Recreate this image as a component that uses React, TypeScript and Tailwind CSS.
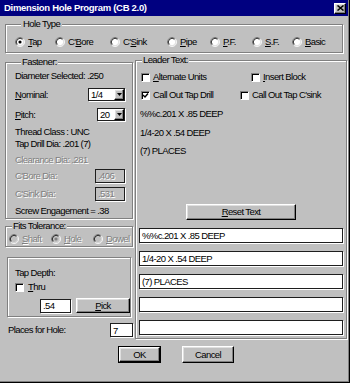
import React from 'react';

const FONT = "[font-family:'Liberation_Sans',Arial,sans-serif]";
const ETCHED = 'border border-[#808080] shadow-[1px_1px_0_#fff,inset_1px_1px_0_#fff]';
const FIELD = 'border border-[#1e1e1e] shadow-[1px_1px_0_#fff]';
const RAISED =
  'border border-t-white border-l-white border-b-black border-r-black shadow-[inset_-1px_-1px_0_#808080,inset_1px_1px_0_#dfdfdf] bg-[#c0c0c0]';
const DISABLED = 'text-[#808080] [text-shadow:1px_1px_0_#fff]';

function U({ children }: { children: React.ReactNode }) {
  return <span className="underline underline-offset-[1px]">{children}</span>;
}

function Radio({ checked = false, disabled = false }: { checked?: boolean; disabled?: boolean }) {
  return (
    <svg width="10" height="10" viewBox="0 0 12 12" className="shrink-0">
      <circle cx="6" cy="6" r="4.5" fill={disabled ? '#c0c0c0' : '#fff'} />
      <path d="M2.11 9.89 A5.5 5.5 0 0 1 9.89 2.11" stroke="#808080" fill="none" />
      <path d="M9.89 2.11 A5.5 5.5 0 0 1 2.11 9.89" stroke="#fff" fill="none" />
      <path d="M2.82 9.18 A4.5 4.5 0 0 1 9.18 2.82" stroke="#000" fill="none" />
      <path d="M9.18 2.82 A4.5 4.5 0 0 1 2.82 9.18" stroke="#dfdfdf" fill="none" />
      {checked && <circle cx="6" cy="6" r="1.9" fill={disabled ? '#808080' : '#000'} />}
    </svg>
  );
}

function Check({ checked = false }: { checked?: boolean }) {
  return (
    <div className="w-[9px] h-[9px] shrink-0 bg-white border border-t-[#808080] border-l-[#808080] border-b-white border-r-white shadow-[inset_1px_1px_0_#000] flex items-center justify-center">
      {checked && (
        <svg width="7" height="7" viewBox="0 0 7 7">
          <polyline points="1,3 3,5 6,1.5" stroke="#000" strokeWidth="1.4" fill="none" />
        </svg>
      )}
    </div>
  );
}

function Combo({ value, width }: { value: string; width: string }) {
  return (
    <div className={`${width} h-[13px] bg-white ${FIELD} flex items-center justify-between`}>
      <span className="pl-[2px]">{value}</span>
      <div className={`w-[10px] h-[11px] ${RAISED} flex items-center justify-center`}>
        <svg width="5" height="3" viewBox="0 0 5 3">
          <polygon points="0,0 5,0 2.5,3" fill="#000" />
        </svg>
      </div>
    </div>
  );
}

function TextBox({ value = '', className = '' }: { value?: string; className?: string }) {
  return (
    <div className={`bg-white ${FIELD} flex items-center pl-[2px] leading-[11px] ${className}`}>
      {value}
    </div>
  );
}

export default function App() {
  const holeTypes: [React.ReactNode, string, boolean][] = [
    [<><U>T</U>ap</>, 'w-[40px]', true],
    [<>C'<U>B</U>ore</>, 'w-[55px]', false],
    [<>C'<U>S</U>ink</>, 'w-[57px]', false],
    [<><U>P</U>ipe</>, 'w-[43px]', false],
    [<><U>P</U>.F.</>, 'w-[42px]', false],
    [<><U>S</U>.F.</>, 'w-[40px]', false],
    [<><U>B</U>asic</>, 'w-[40px]', false],
  ];

  return (
    <div
      className={`w-[350px] h-[383px] bg-[#c0c0c0] overflow-hidden flex flex-col text-[9.5px] tracking-[-0.6px] leading-[12px] text-black ${FONT} shadow-[inset_-1px_-1px_0_#000,inset_-2px_-2px_0_#808080]`}
    >
      {/* title bar */}
      <div className="h-[16px] w-[348px] shrink-0 bg-[#000080] flex items-center justify-between pl-[4px] pr-[2px]">
        <span className="text-white font-bold text-[9.5px] tracking-[-0.3px]">Dimension Hole Program (CB 2.0)</span>
        <div className={`w-[12px] h-[11px] ${RAISED} flex items-center justify-center`}>
          <svg width="7" height="6" viewBox="0 0 7 6">
            <path d="M0.5 0.5 L6.5 5.5 M6.5 0.5 L0.5 5.5" stroke="#000" strokeWidth="1.5" />
          </svg>
        </div>
      </div>

      {/* hole type */}
      <fieldset className={`mt-[3px] ml-[5px] w-[338px] ${ETCHED} pt-[7px] pb-[4px] pl-[9px]`}>
        <legend className="ml-[6px] px-[2px] leading-[10px] bg-[#c0c0c0]">Hole Type</legend>
        <div className="flex items-center h-[12px]">
          {holeTypes.map(([label, w, on], i) => (
            <div key={i} className={`${w} flex items-center gap-[3px]`}>
              <Radio checked={on} />
              <span>{label}</span>
            </div>
          ))}
        </div>
      </fieldset>

      <div className="flex ml-[5px] mt-[1px]">
        {/* left column */}
        <div className="w-[128px] flex flex-col">
          <fieldset className={`mt-[3px] ${ETCHED} pl-[9px] pb-[1px]`}>
            <legend className="ml-[6px] px-[1px] leading-[10px] bg-[#c0c0c0]">Fastener:</legend>
            <div className="mt-[3px] h-[12px] flex items-center">Diameter Selected: .250</div>
            <div className="mt-[6px] h-[13px] flex items-center">
              <span className="w-[73px]">
                <U>N</U>ominal:
              </span>
              <Combo value="1/4" width="w-[37px]" />
            </div>
            <div className="mt-[7px] h-[13px] flex items-center">
              <span className="w-[82px]">
                <U>P</U>itch:
              </span>
              <Combo value="20" width="w-[28px]" />
            </div>
            <div className="mt-[5px] h-[12px] flex items-center">Thread Class : UNC</div>
            <div className="h-[12px] flex items-center">Tap Drill Dia: .201 (7)</div>
            <div className={`mt-[4px] h-[12px] flex items-center ${DISABLED}`}>Clearance Dia: .281</div>
            <div className="mt-[3px] h-[14px] flex items-center">
              <span className={`w-[80px] ${DISABLED}`}>C'Bore Dia:</span>
              <div className={`w-[30px] h-[14px] ${FIELD} bg-[#c0c0c0] flex items-center pl-[2px] ${DISABLED}`}>
                .406
              </div>
            </div>
            <div className="mt-[4px] h-[14px] flex items-center">
              <span className={`w-[80px] ${DISABLED}`}>C'Sink Dia:</span>
              <div className={`w-[30px] h-[14px] ${FIELD} bg-[#c0c0c0] flex items-center pl-[2px] ${DISABLED}`}>
                .531
              </div>
            </div>
            <div className="mt-[4px] h-[12px] flex items-center">Screw Engagement = .38</div>
          </fieldset>

          <fieldset className={`mt-[2px] ${ETCHED} pl-[3px] pb-[1px]`}>
            <legend className="ml-[3px] px-[1px] leading-[10px] bg-[#c0c0c0]">Fits Tolerance:</legend>
            <div className={`mt-[2px] h-[12px] flex items-center ${DISABLED}`}>
              <div className="w-[42px] flex items-center gap-[3px]">
                <Radio disabled />
                <span>
                  <U>S</U>haft
                </span>
              </div>
              <div className="w-[42px] flex items-center gap-[3px]">
                <Radio disabled checked />
                <span>
                  <U>H</U>ole
                </span>
              </div>
              <div className="flex items-center gap-[3px]">
                <Radio disabled />
                <span>
                  <U>D</U>owel
                </span>
              </div>
            </div>
          </fieldset>

          <div className={`mt-[10px] ml-[2px] w-[124px] ${ETCHED} pt-[9px] pb-[3px] pl-[7px]`}>
            <div className="h-[12px] flex items-center">Tap Depth:</div>
            <div className="mt-[2px] h-[12px] flex items-center gap-[4px]">
              <Check />
              <span>
                <U>T</U>hru
              </span>
            </div>
            <div className="mt-[5px] h-[15px] flex items-center pl-[25px] gap-[5px]">
              <TextBox value=".54" className="w-[32px] h-[14px]" />
              <div className={`w-[56px] h-[15px] ${RAISED} flex items-center justify-center`}>
                <span>
                  <U>P</U>ick
                </span>
              </div>
            </div>
          </div>

          <div className="mt-[6px] h-[14px] flex items-center">
            <span className="w-[105px] pl-[3px]">Places for Hole:</span>
            <TextBox value="7" className="w-[23px] h-[14px]" />
          </div>
        </div>

        {/* leader text */}
        <fieldset className={`ml-[2px] mt-[1px] w-[212px] ${ETCHED} pb-[3px] flex flex-col`}>
          <legend className="ml-[6px] px-[1px] leading-[10px] bg-[#c0c0c0]">Leader Text:</legend>
          <div className="mt-[6px] h-[12px] flex items-center pl-[5px]">
            <div className="w-[110px] flex items-center gap-[3px]">
              <Check />
              <span>
                <U>A</U>lternate Units
              </span>
            </div>
            <div className="flex items-center gap-[3px]">
              <Check />
              <span>
                <U>I</U>nsert Block
              </span>
            </div>
          </div>
          <div className="mt-[6px] h-[12px] flex items-center pl-[5px]">
            <div className="w-[99px] flex items-center gap-[3px]">
              <Check checked />
              <span>Call Out Tap Drill</span>
            </div>
            <div className="flex items-center gap-[3px]">
              <Check />
              <span>Call Out Tap C'sink</span>
            </div>
          </div>
          <div className="mt-[7px] h-[12px] pl-[4px] flex items-center">%%c.201 X .85 DEEP</div>
          <div className="mt-[7px] h-[12px] pl-[4px] flex items-center">1/4-20 X .54 DEEP</div>
          <div className="mt-[6px] h-[12px] pl-[4px] flex items-center">(7) PLACES</div>
          <div className={`mt-[47px] self-center w-[110px] h-[16px] ${RAISED} flex items-center justify-center`}>
            <span>
              <U>R</U>eset Text
            </span>
          </div>
          <div className="mt-[8px] ml-[3px] flex flex-col gap-[8px]">
            <TextBox value="%%c.201 X .85 DEEP" className="w-[204px] h-[15px]" />
            <TextBox value="1/4-20 X .54 DEEP" className="w-[204px] h-[15px]" />
            <TextBox value="(7) PLACES" className="w-[204px] h-[15px]" />
            <TextBox className="w-[204px] h-[15px]" />
            <TextBox className="w-[204px] h-[15px]" />
          </div>
        </fieldset>
      </div>

      {/* buttons */}
      <div className="mt-[7px] flex pl-[118px] gap-[21px]">
        <div className="w-[43px] h-[17px] border border-black">
          <div className={`w-full h-full ${RAISED} flex items-center justify-center`}>OK</div>
        </div>
        <div className={`w-[52px] h-[17px] ${RAISED} flex items-center justify-center`}>Cancel</div>
      </div>
    </div>
  );
}
